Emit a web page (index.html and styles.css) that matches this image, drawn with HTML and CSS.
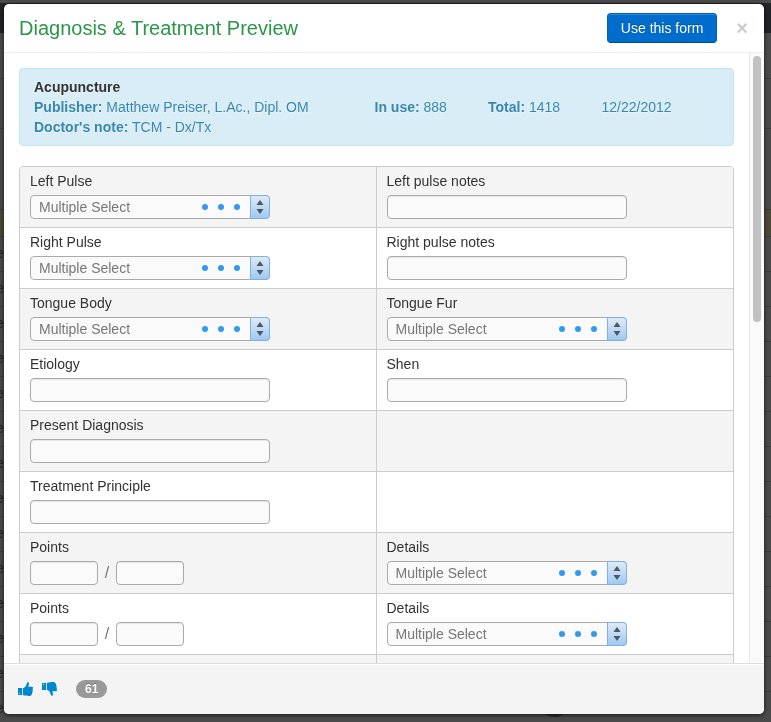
FILE: index.html
```
<!DOCTYPE html>
<html lang="en">
<head>
  <meta charset="UTF-8">
  <meta name="viewport" content="width=device-width, initial-scale=1.0">
  <title>Diagnosis &amp; Treatment Preview</title>
  <link rel="stylesheet" href="styles.css">
</head>
<body>

<!-- shared icons -->
<svg class="sprite" width="0" height="0" aria-hidden="true">
  <symbol id="thumb" viewBox="0 0 15 14">
    <path fill-rule="evenodd" d="M0 6h4.200v7H0zM1 11v1h1v-1z"/>
    <path d="M5 6.200c1.600-.6 2.700-1.700 3.300-3.200L9 .7C9.300 0 11 0 11 1.600c0 1.200-.4 2.200-.7 3.100H14c1.200 0 1.300 1.500.5 1.900.6.600.5 1.600-.1 2 .5.700.3 1.600-.3 2 .3.800 0 1.500-.6 1.800-.2 1.100-1 1.600-2 1.600-2.500 0-4.500-.2-6.500-.9z"/>
  </symbol>
  <symbol id="dots" viewBox="0 0 38 6">
    <circle cx="3" cy="3" r="3"/><circle cx="19" cy="3" r="3"/><circle cx="35" cy="3" r="3"/>
  </symbol>
  <symbol id="arrows" viewBox="0 0 8 14">
    <path d="M4 0l3.500 5h-7zM4 14l3.500-5h-7z"/>
  </symbol>
</svg>

<!-- page behind the dialog -->
<div class="backdrop" aria-hidden="true">
  <div class="navbar"></div>
  <div class="toolbar"></div>
  <div class="filters"></div>
  <div class="blank"></div>
  <div class="highlight"></div>
  <div class="line">e</div>
  <div class="line">e</div>
  <div class="line">e</div>
  <div class="line">e</div>
  <div class="line">e</div>
  <div class="line">e</div>
  <div class="line">e</div>
  <div class="line">e</div>
  <div class="line">e</div>
  <div class="line">e</div>
  <div class="line">e</div>
  <div class="line">e</div>
  <div class="line">e</div>
  <div class="line">e<span class="pill"></span></div>
</div>

<div class="modal" role="dialog" aria-labelledby="title">
  <div class="modal-header">
    <h3 id="title">Diagnosis &amp; Treatment Preview</h3>
    <button class="btn-primary" type="button">Use this form</button>
    <button class="close" type="button" aria-label="Close">&times;</button>
  </div>

  <div class="modal-body">
    <div class="content">
      <div class="alert">
        <strong class="name">Acupuncture</strong>
        <div class="meta">
          <span><b>Publisher:</b> Matthew Preiser, L.Ac., Dipl. OM</span>
          <span><b>In use:</b> 888</span>
          <span><b>Total:</b> 1418</span>
          <span>12/22/2012</span>
        </div>
        <div><b>Doctor's note:</b> TCM - Dx/Tx</div>
      </div>

      <table class="form-table">
        <tr>
          <td>
            <label for="left-pulse">Left Pulse</label>
            <div class="multi">
              <select id="left-pulse"><option>Multiple Select</option></select>
              <svg class="dots"><use href="#dots"/></svg>
              <span class="stepper"><svg><use href="#arrows"/></svg></span>
            </div>
          </td>
          <td>
            <label for="left-notes">Left pulse notes</label>
            <input id="left-notes" type="text">
          </td>
        </tr>
        <tr>
          <td>
            <label for="right-pulse">Right Pulse</label>
            <div class="multi">
              <select id="right-pulse"><option>Multiple Select</option></select>
              <svg class="dots"><use href="#dots"/></svg>
              <span class="stepper"><svg><use href="#arrows"/></svg></span>
            </div>
          </td>
          <td>
            <label for="right-notes">Right pulse notes</label>
            <input id="right-notes" type="text">
          </td>
        </tr>
        <tr>
          <td>
            <label for="tongue-body">Tongue Body</label>
            <div class="multi">
              <select id="tongue-body"><option>Multiple Select</option></select>
              <svg class="dots"><use href="#dots"/></svg>
              <span class="stepper"><svg><use href="#arrows"/></svg></span>
            </div>
          </td>
          <td>
            <label for="tongue-fur">Tongue Fur</label>
            <div class="multi">
              <select id="tongue-fur"><option>Multiple Select</option></select>
              <svg class="dots"><use href="#dots"/></svg>
              <span class="stepper"><svg><use href="#arrows"/></svg></span>
            </div>
          </td>
        </tr>
        <tr>
          <td>
            <label for="etiology">Etiology</label>
            <input id="etiology" type="text">
          </td>
          <td>
            <label for="shen">Shen</label>
            <input id="shen" type="text">
          </td>
        </tr>
        <tr>
          <td>
            <label for="diagnosis">Present Diagnosis</label>
            <input id="diagnosis" type="text">
          </td>
          <td></td>
        </tr>
        <tr>
          <td>
            <label for="principle">Treatment Principle</label>
            <input id="principle" type="text">
          </td>
          <td></td>
        </tr>
        <tr>
          <td>
            <label for="points-1">Points</label>
            <div class="pair">
              <input id="points-1" type="text">
              <span>/</span>
              <input type="text" aria-label="Points, second value">
            </div>
          </td>
          <td>
            <label for="details-1">Details</label>
            <div class="multi">
              <select id="details-1"><option>Multiple Select</option></select>
              <svg class="dots"><use href="#dots"/></svg>
              <span class="stepper"><svg><use href="#arrows"/></svg></span>
            </div>
          </td>
        </tr>
        <tr>
          <td>
            <label for="points-2">Points</label>
            <div class="pair">
              <input id="points-2" type="text">
              <span>/</span>
              <input type="text" aria-label="Points, second value">
            </div>
          </td>
          <td>
            <label for="details-2">Details</label>
            <div class="multi">
              <select id="details-2"><option>Multiple Select</option></select>
              <svg class="dots"><use href="#dots"/></svg>
              <span class="stepper"><svg><use href="#arrows"/></svg></span>
            </div>
          </td>
        </tr>
        <tr>
          <td></td>
          <td></td>
        </tr>
      </table>
    </div>
    <div class="scrollbar"><div class="thumb"></div></div>
  </div>

  <div class="modal-footer">
    <button class="vote" type="button" aria-label="Like"><svg><use href="#thumb"/></svg></button>
    <button class="vote down" type="button" aria-label="Dislike"><svg><use href="#thumb"/></svg></button>
    <span class="badge">61</span>
  </div>
</div>

</body>
</html>
```
FILE: styles.css
```
* {
  box-sizing: border-box;
}

body {
  margin: 0;
  height: 100vh;
  padding: 4px 7px 8px 4px;
  overflow: hidden;
  background: #4a4a4a;
  color: #333;
  font: 14px/20px "Liberation Sans", Arial, sans-serif;
}

button, input, select {
  font: inherit;
}

.sprite {
  position: absolute;
}

/* page behind the dialog */
.backdrop {
  position: fixed;
  inset: 0;
  z-index: -1;
  padding-top: 3px;
  overflow: hidden;
  color: #222;
}

.backdrop div { border-bottom: 1px solid #3c3c3b; }
.backdrop .navbar { height: 30px; background: #202327; border: 0; }
.backdrop .toolbar { height: 46px; }
.backdrop .filters { height: 50px; }
.backdrop .blank { height: 81px; }
.backdrop .highlight { height: 27px; background: #4d4939; }

.backdrop .line {
  display: flex;
  align-items: center;
  height: 35px;
  padding-bottom: 3px;
  text-indent: -4px;
}

.pill {
  width: 23px;
  height: 18px;
  margin-left: 539px;
  border-radius: 9px;
  background: #2d2d2d;
}

/* dialog */
.modal {
  display: flex;
  flex-direction: column;
  height: 100%;
  overflow: hidden;
  border-radius: 5px;
  background: #fff;
  box-shadow: 0 1px 4px rgba(0,0,0,0.7);
}

.modal-header {
  display: flex;
  align-items: center;
  height: 49px;
  padding: 0 14px 0 15px;
  border-bottom: 1px solid #eee;
}

.modal-header h3 {
  flex: 1;
  margin: 0;
  color: #299747;
  font-size: 20px;
  font-weight: normal;
}

.btn-primary {
  height: 30px;
  padding: 0 13px;
  border: 1px solid #0055b3;
  border-color: #0060c0 #0060c0 #004c99;
  border-radius: 4px;
  background: #006dcc;
  box-shadow: inset 0 1px 0 rgba(255,255,255,0.2);
  color: #fff;
  text-shadow: 0 -1px 0 rgba(0,0,0,0.25);
  cursor: pointer;
}

.close {
  margin-left: 17px;
  padding: 0 2px;
  border: 0;
  background: none;
  color: #ccc;
  font-size: 20px;
  font-weight: bold;
  cursor: pointer;
}

.modal-body {
  display: flex;
  flex: 1;
  min-height: 0;
}

.content {
  flex: 1;
  padding: 15px;
  overflow: hidden;
}

.alert {
  margin-bottom: 20px;
  padding: 8px 18px 8px 14px;
  border: 1px solid #bce8f1;
  border-radius: 4px;
  background: #d9edf7;
  color: #3a87ad;
  text-shadow: 0 1px 0 rgba(255,255,255,0.5);
}

.alert .name { color: #333; }

.meta {
  display: grid;
  grid-template-columns: 3fr 1fr 1fr 1fr;
  white-space: nowrap;
}

.form-table {
  width: 100%;
  table-layout: fixed;
  border: 1px solid #ccc;
  border-radius: 4px;
  border-spacing: 0;
  overflow: hidden;
}

.form-table td {
  height: 61px;
  padding: 4px 10px 8px;
  border-bottom: 1px solid #ccc;
  vertical-align: top;
}

.form-table td:first-child {
  width: 50%;
  border-right: 1px solid #ccc;
}

.form-table tr:nth-child(odd) td { background: #f4f4f4; }

.form-table label {
  display: block;
  margin-bottom: 4px;
}

.form-table input,
.multi select {
  display: block;
  width: 240px;
  height: 24px;
  padding: 0 8px;
  border: 1px solid #aaa;
  border-radius: 4px;
  background: #fafafa;
  color: #777;
}

.form-table input {
  box-shadow: inset 0 1px 1px rgba(0,0,0,0.08);
}

.multi {
  position: relative;
  width: 240px;
}

.multi select { appearance: none; }

.dots {
  position: absolute;
  top: 9px;
  right: 30px;
  width: 38px;
  height: 6px;
  fill: #3399ee;
  pointer-events: none;
}

.stepper {
  position: absolute;
  top: 0;
  right: 0;
  display: flex;
  align-items: center;
  justify-content: center;
  width: 20px;
  height: 24px;
  border: 1px solid #7fb2e2;
  border-radius: 0 4px 4px 0;
  background: linear-gradient(#dfeaf6, #9fc9f1);
  pointer-events: none;
}

.stepper svg {
  width: 8px;
  height: 14px;
  fill: #4d5661;
}

.pair {
  display: flex;
  align-items: center;
  color: #777;
}

.pair input { width: 68px; }

.pair span {
  width: 18px;
  font-size: 16px;
  text-align: center;
}

.scrollbar {
  width: 15px;
  padding: 3px;
  border-left: 1px solid #e8e8e8;
  background: #fafafa;
}

.thumb {
  width: 8px;
  height: 44%;
  border-radius: 4px;
  background: #c1c1c1;
}

.modal-footer {
  display: flex;
  align-items: center;
  height: 51px;
  padding: 0 14px;
  border-top: 1px solid #ddd;
  background: #f4f4f4;
  box-shadow: inset 0 1px 0 #fff;
}

.vote {
  display: flex;
  margin-right: 9px;
  padding: 0;
  border: 0;
  background: none;
  cursor: pointer;
}

.vote svg {
  width: 15px;
  height: 14px;
  fill: #0088cc;
}

.vote.down svg { transform: scaleY(-1); }

.badge {
  margin-left: 10px;
  padding: 0 9px;
  border-radius: 9px;
  background: #999;
  color: #fff;
  font-size: 12px;
  font-weight: bold;
  line-height: 18px;
  text-shadow: 0 -1px 0 rgba(0,0,0,0.25);
}
```
